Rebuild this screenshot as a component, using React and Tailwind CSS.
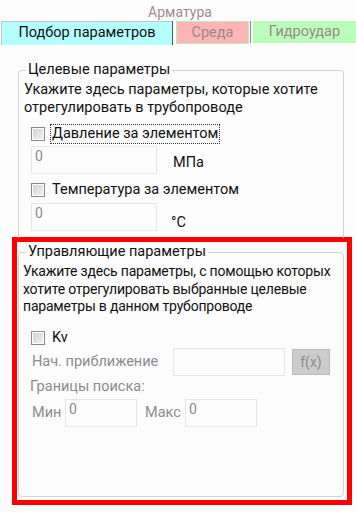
import React from 'react';

const font = { fontFamily: 'Roboto, "Noto Sans", sans-serif' };

function Check({ label, focus }) {
  return (
    <div className="flex items-center h-[18px]">
      <div className="w-[14px] h-[14px] border border-[#8a8a8a] bg-white flex items-center justify-center shrink-0">
        <div className="w-[10px] h-[10px] bg-gradient-to-br from-[#d4d4d4] to-[#f0f0f0]" />
      </div>
      <span
        className={`ml-[5px] text-[14.5px] leading-[18px] text-[#111] px-[1px] ${
          focus ? 'border border-dotted border-[#333]' : 'border border-transparent'
        }`}
      >
        {label}
      </span>
    </div>
  );
}

function Field({ w, value }) {
  return (
    <div className={`${w} h-[28px] border border-[#e6e6e6] bg-[#fcfcfc] px-[3px] text-[14px] leading-[18px] text-[#8c8c8c]`}>
      {value}
    </div>
  );
}

function Group({ title, children, className }) {
  return (
    <div className={`relative border border-[#d4d4d4] rounded-[4px] ${className}`}>
      <div className="absolute -top-[10px] left-[7px] bg-[#fcfcfc] px-[2px] text-[14.5px] leading-[18px] text-[#111]">
        {title}
      </div>
      {children}
    </div>
  );
}

export default function App() {
  return (
    <div className="w-[356px] h-[512px] bg-[#fcfcfc] overflow-hidden" style={font}>
      {/* header */}
      <div className="h-[21px] text-center text-[14px] leading-[24px] text-[#a08c8c] pl-[4px]">Арматура</div>
      <div className="flex h-[24px] text-[14.5px] leading-[22px]">
        <div className="ml-[1px] w-[171px] bg-[#b6ffff] border-l border-t border-[#c4c4c4] text-[#111] text-center">
          Подбор параметров
        </div>
        <div className="w-[1px] bg-[#555]" />
        <div className="ml-[3px] w-[73px] h-[23px] bg-[#ffb5b5] border border-[#b6f0b6] text-[#9a8888] text-center">
          Среда
        </div>
        <div className="ml-[1px] w-[1px] h-[22px] bg-[#888]" />
        <div className="ml-[2px] flex-1 h-[22px] bg-[#b9ffb9] text-[#9a8888] text-center">Гидроудар</div>
      </div>

      {/* target parameters (bottom edge hidden under the red frame) */}
      <Group title="Целевые параметры" className="mt-[25px] ml-[18px] w-[326px] h-[168px] border-b-0 rounded-b-none">
        <div className="pt-[10px] pl-[5px] text-[14.5px] leading-[18px] text-[#111] whitespace-nowrap">
          Укажите здесь параметры, которые хотите
          <br />
          отрегулировать в трубопроводе
        </div>
        <div className="pl-[12px] pt-[8px]">
          <Check label="Давление за элементом" focus />
          <div className="flex items-end mt-[3px]">
            <Field w="w-[126px]" value="0" />
            <span className="ml-[16px] text-[14.5px] leading-[18px] text-[#111] mb-[2px]">МПа</span>
          </div>
          <div className="mt-[7px]">
            <Check label="Температура за элементом" />
          </div>
          <div className="flex items-end mt-[4px]">
            <Field w="w-[126px]" value="0" />
            <span className="ml-[14px] text-[14.5px] leading-[18px] text-[#111] -mb-[1px]">°C</span>
          </div>
        </div>
      </Group>

      {/* control parameters, highlighted */}
      <div className="-mt-[1px] ml-[12px] w-[340px] h-[268px] border-[5px] border-[#ff0000]">
        <Group title="Управляющие параметры" className="mt-[10px] ml-[1px] w-[326px] h-[245px]">
          <div className="pt-[10px] pl-[4px] text-[14px] leading-[17.5px] text-[#111] whitespace-nowrap tracking-[-0.2px]">
            Укажите здесь параметры, с помощью которых
            <br />
            хотите отрегулировать выбранные целевые
            <br />
            параметры в данном трубопроводе
          </div>
          <div className="pl-[12px] pt-[13px]">
            <Check label="Kv" />
            <div className="flex items-center mt-[1px]">
              <span className="ml-[1px] w-[141px] text-[14.5px] text-[#8c8c8c]">Нач. приближение</span>
              <Field w="w-[112px]" value="" />
              <div className="ml-[7px] w-[38px] h-[26px] bg-[#cccccc] border border-[#bababa] text-[14px] leading-[24px] text-center text-[#8c8c8c]">
                f(x)
              </div>
            </div>
            <div className="mt-[1px] -ml-[1px] text-[14.5px] leading-[20px] text-[#8c8c8c]">Границы поиска:</div>
            <div className="flex items-center mt-[2px]">
              <span className="ml-[1px] w-[33px] text-[14.5px] text-[#8c8c8c]">Мин</span>
              <Field w="w-[72px]" value="0" />
              <span className="ml-[8px] w-[40px] text-[14.5px] text-[#8c8c8c]">Макс</span>
              <Field w="w-[72px]" value="0" />
            </div>
          </div>
        </Group>
      </div>
    </div>
  );
}
